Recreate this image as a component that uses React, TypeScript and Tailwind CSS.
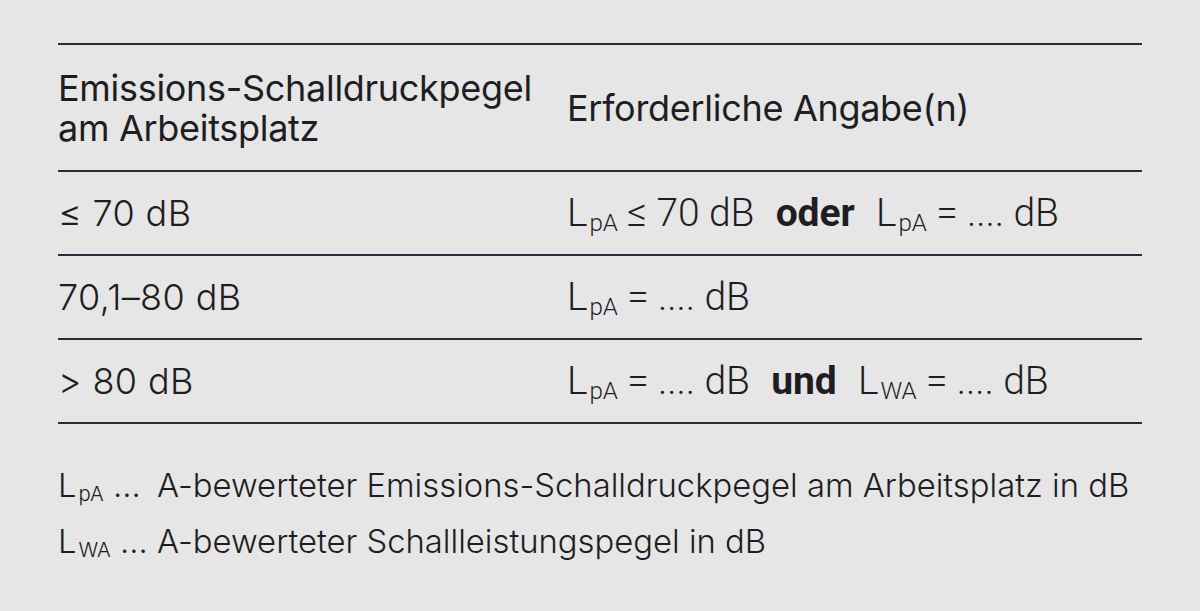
import React from "react";

const Sub = ({ children }: { children: React.ReactNode }) => (
  <sub className="text-[0.62em] relative top-[0.2em] align-baseline ml-[2px]">{children}</sub>
);

export default function App() {
  const inter = { fontFamily: "Inter, 'Noto Sans', sans-serif" };
  const cond = { fontFamily: "Roboto, 'Liberation Sans', sans-serif" };
  return (
    <div className="w-[1200px] h-[611px] bg-[#e6e6e6] text-[#1e1e22] overflow-hidden" style={inter}>
      <div className="pt-[43px] px-[58px] w-[1200px]">
        <div className="grid grid-cols-[509px_1fr] border-t-2 border-[#2c2c40]">
          <div className="h-[125px] flex items-center text-[36px] leading-[40px] font-normal tracking-[-0.3px]">
            <div>Emissions-Schalldruckpegel<br />am Arbeitsplatz</div>
          </div>
          <div className="h-[125px] flex items-center text-[36px] leading-[40px] tracking-[-0.3px]">
            Erforderliche Angabe(n)
          </div>
        </div>
        {[
          { l: "≤ 70 dB", r: (
            <>L<Sub>pA</Sub> ≤ 70 dB <b className="font-bold mx-[12px]">oder</b> L<Sub>pA</Sub> = .... dB</>
          ) },
          { l: "70,1–80 dB", r: (<>L<Sub>pA</Sub> = .... dB</>) },
          { l: "> 80 dB", r: (
            <>L<Sub>pA</Sub> = .... dB <b className="font-bold mx-[12px]">und</b> L<Sub>WA</Sub> = .... dB</>
          ) },
        ].map((row, i) => (
          <div key={i} className="grid grid-cols-[509px_1fr] border-t-2 border-[#2c2c40] h-[84px]">
            <div className="flex items-center text-[36px] font-light tracking-[0.4px]">{row.l}</div>
            <div className="flex items-center text-[39px] font-light tracking-[-0.1px]" style={cond}>
              <span>{row.r}</span>
            </div>
          </div>
        ))}
        <div className="border-t-2 border-[#2c2c40]" />
        <div className="mt-[33px] text-[32.8px] font-light leading-[56px]">
          <div className="flex">
            <span className="w-[99px] shrink-0">L<Sub>pA</Sub> ...</span>
            <span>A-bewerteter Emissions-Schalldruckpegel am Arbeitsplatz in dB</span>
          </div>
          <div className="flex">
            <span className="w-[99px] shrink-0">L<Sub>WA</Sub> ...</span>
            <span>A-bewerteter Schallleistungspegel in dB</span>
          </div>
        </div>
      </div>
    </div>
  );
}
